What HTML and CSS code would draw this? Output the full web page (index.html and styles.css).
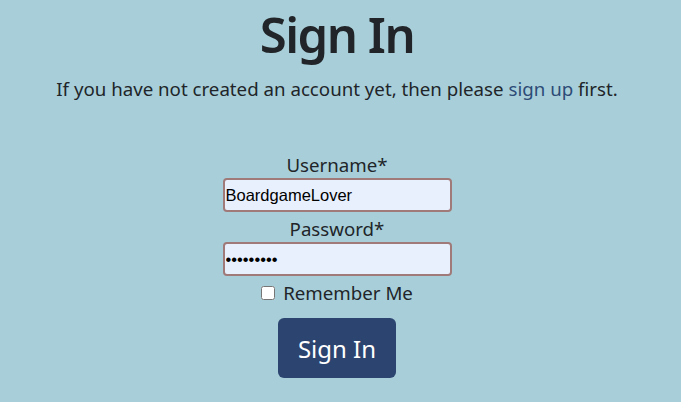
FILE: index.html
```html
<!DOCTYPE html>
<html>
<head>
<meta charset="utf-8">
<link rel="stylesheet" href="styles.css">
</head>
<body>
<main class="page">
  <h1 class="title">Sign In</h1>
  <p class="intro">If you have not created an account yet, then please <a class="link" href="#">sign up</a> first.</p>
  <form class="form">
    <label class="label" for="u">Username*</label>
    <input class="field" id="u" type="text" value="BoardgameLover">
    <label class="label" for="p">Password*</label>
    <input class="field pw" id="p" type="password" value="password1">
    <label class="check"><input type="checkbox" class="box"> Remember Me</label>
    <button class="btn" type="button">Sign In</button>
  </form>
</main>
</body>
</html>
```
FILE: styles.css
```css
html, body {
  margin: 0;
  padding: 0;
}
body {
  background: #a8cfd9;
  color: #212529;
  font-family: "Noto Sans", "Open Sans", sans-serif;
  height: 402px;
  overflow: hidden;
}
.page {
  display: flex;
  flex-direction: column;
  align-items: center;
  padding-right: 7px;
}
.title {
  margin: 4px 0 0;
  font-size: 49px;
  font-weight: 600;
  line-height: 60px;
  letter-spacing: -1.5px;
}
.intro {
  margin: 11px 0 0;
  font-size: 18.7px;
  line-height: 28px;
}
.link {
  color: #2d4b76;
  text-decoration: none;
}
.form {
  margin-top: 48px;
  display: flex;
  flex-direction: column;
  align-items: center;
}
.label {
  font-size: 18.7px;
  line-height: 27px;
}
.field {
  box-sizing: border-box;
  width: 229px;
  height: 34px;
  border: 2px solid #a07a78;
  border-radius: 4px;
  background: #e8f0fe;
  font-family: "Liberation Sans", Arial, sans-serif;
  font-size: 16.5px;
  padding: 0 1px;
  color: #000;
  margin: 0 0 3px;
}
.check {
  display: flex;
  align-items: center;
  gap: 8px;
  font-size: 18.7px;
  line-height: 27px;
}
.box {
  margin: 0;
  width: 14px;
  height: 14px;
}
.btn {
  margin-top: 12px;
  width: 118px;
  height: 60px;
  border: none;
  border-radius: 6px;
  background: #2c4470;
  color: #fff;
  font-family: "Noto Sans", "Open Sans", sans-serif;
  font-size: 24px;
}
```
